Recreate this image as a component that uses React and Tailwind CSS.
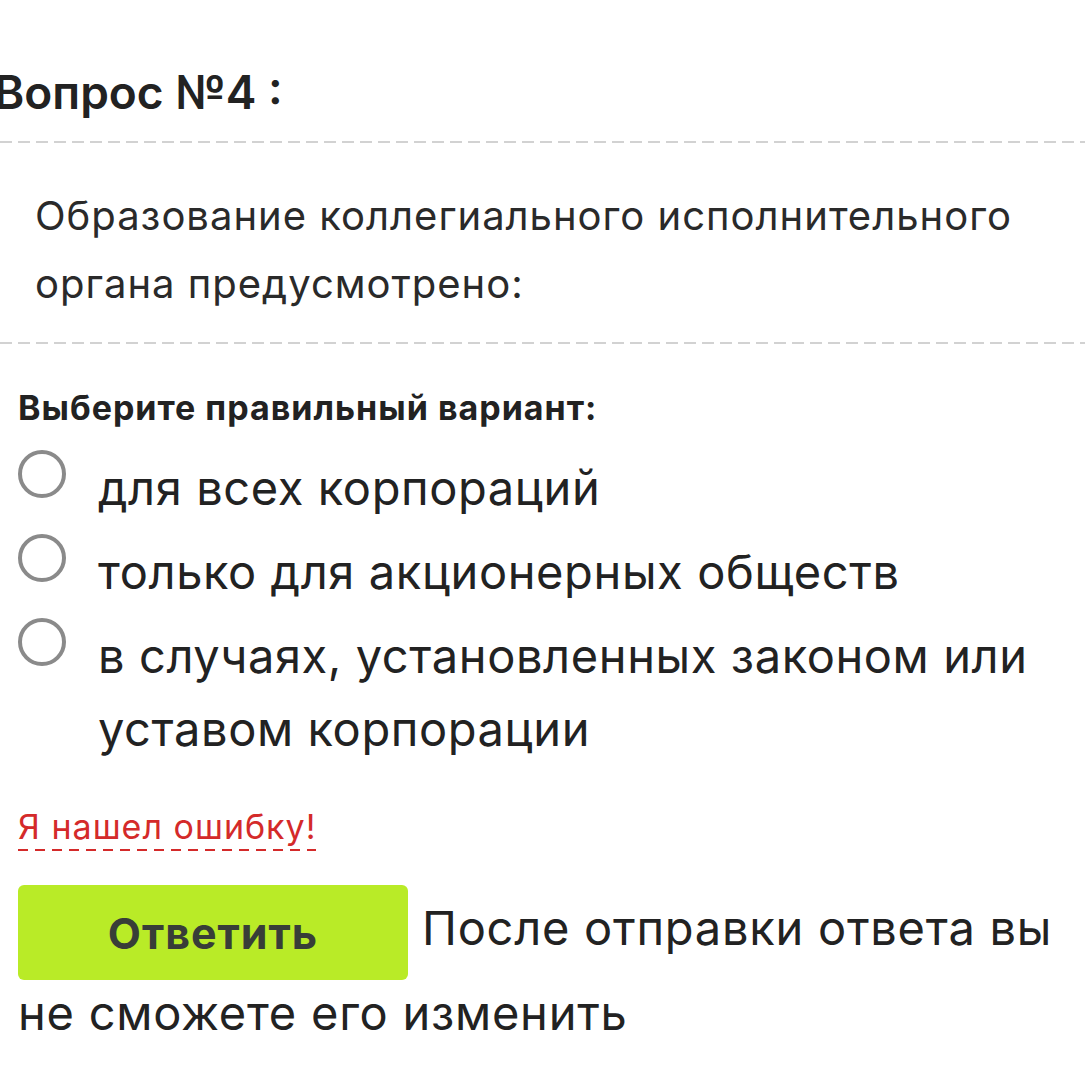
export default function App() {
  const options = [
    "для всех корпораций",
    "только для акционерных обществ",
    "в случаях, установленных законом или уставом корпорации",
  ];

  return (
    <div className="min-h-[1078px] w-[1085px] overflow-hidden bg-white font-['Inter',sans-serif] text-[#222]">
      <div className="pt-[62px]">
        <h2 className="ml-[-6px] text-[46px] font-semibold leading-[60px]">Вопрос №4 :</h2>
        <div className="mt-[19px] h-[2px] bg-[repeating-linear-gradient(to_right,#d2d2d2_0_12px,transparent_12px_18px)]" />
        <p className="px-[35px] pt-[39px] pb-[24px] text-[40px] leading-[68px] tracking-[1px] text-[#2a2a2a]">
          Образование коллегиального исполнительного органа предусмотрено:
        </p>
        <div className="h-[2px] bg-[repeating-linear-gradient(to_right,#d2d2d2_0_12px,transparent_12px_18px)]" />
      </div>

      <div className="px-[18px] pt-[42px]">
        <div className="text-[34px] font-bold leading-[44px] tracking-[1px]">
          Выберите правильный вариант:
        </div>
        <ul className="mt-[21px] flex flex-col gap-[11px]">
          {options.map((o) => (
            <li key={o} className="flex items-start">
              <span className="mt-[-1px] h-[48px] w-[48px] shrink-0 rounded-full border-[4px] border-[#8a8a8a]" />
              <span className="ml-[32px] text-[47px] leading-[73px] tracking-[0.6px] text-[#222]">{o}</span>
            </li>
          ))}
        </ul>

        <div className="mt-[42px]">
          <span className="inline-block bg-[repeating-linear-gradient(to_right,#d42a2a_0_10px,transparent_10px_17px)] bg-[length:100%_2px] bg-bottom bg-no-repeat pb-[4px] text-[34px] leading-[40px] tracking-[1px] text-[#d42a2a]">
            Я нашел ошибку!
          </span>
        </div>

        <div className="mt-[34px] text-[47px] leading-[66px] tracking-[0.75px] text-[#222]">
          <button className="mr-[14px] inline-block h-[95px] w-[390px] rounded-[6px] bg-[#b9eb27] align-middle text-[43px] font-bold tracking-[1px] text-[#383d38]">
            Ответить
          </button>
          После отправки ответа вы не сможете его изменить
        </div>
      </div>
    </div>
  );
}
